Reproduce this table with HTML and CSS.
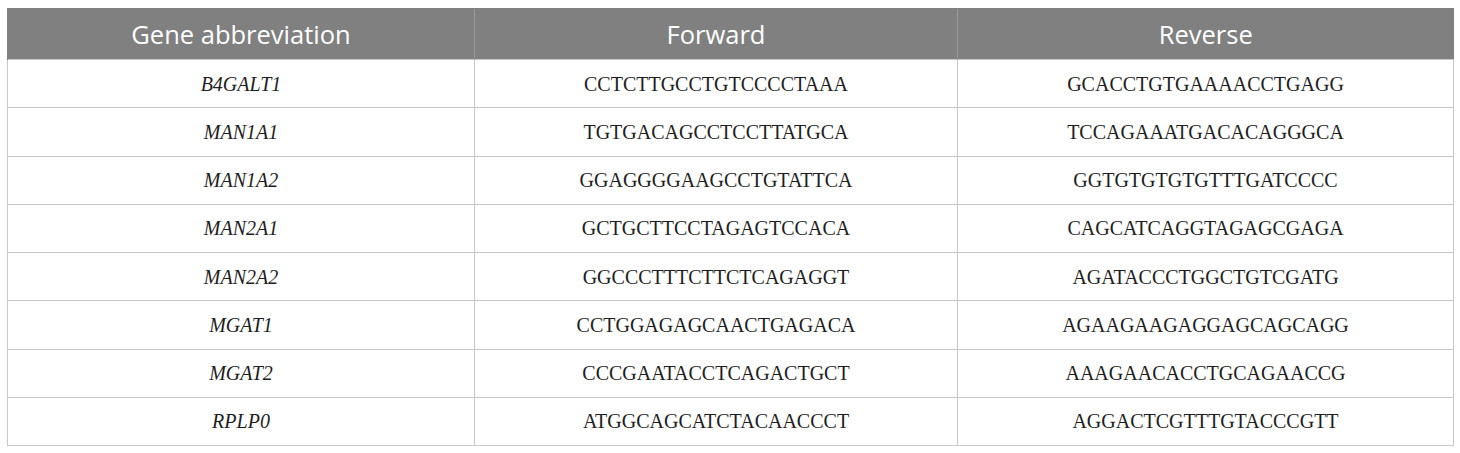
FILE: index.html
```html
<!DOCTYPE html>
<html>
<head>
<meta charset="utf-8">
<link rel="stylesheet" href="styles.css">
</head>
<body>
<table class="primers">
  <colgroup>
    <col class="c1"><col class="c2"><col class="c3">
  </colgroup>
  <thead>
    <tr><th>Gene abbreviation</th><th>Forward</th><th>Reverse</th></tr>
  </thead>
  <tbody>
    <tr><td class="gene">B4GALT1</td><td>CCTCTTGCCTGTCCCCTAAA</td><td>GCACCTGTGAAAACCTGAGG</td></tr>
    <tr><td class="gene">MAN1A1</td><td>TGTGACAGCCTCCTTATGCA</td><td>TCCAGAAATGACACAGGGCA</td></tr>
    <tr><td class="gene">MAN1A2</td><td>GGAGGGGAAGCCTGTATTCA</td><td>GGTGTGTGTGTTTGATCCCC</td></tr>
    <tr><td class="gene">MAN2A1</td><td>GCTGCTTCCTAGAGTCCACA</td><td>CAGCATCAGGTAGAGCGAGA</td></tr>
    <tr><td class="gene">MAN2A2</td><td>GGCCCTTTCTTCTCAGAGGT</td><td>AGATACCCTGGCTGTCGATG</td></tr>
    <tr><td class="gene">MGAT1</td><td>CCTGGAGAGCAACTGAGACA</td><td>AGAAGAAGAGGAGCAGCAGG</td></tr>
    <tr><td class="gene">MGAT2</td><td>CCCGAATACCTCAGACTGCT</td><td>AAAGAACACCTGCAGAACCG</td></tr>
    <tr><td class="gene">RPLP0</td><td>ATGGCAGCATCTACAACCCT</td><td>AGGACTCGTTTGTACCCGTT</td></tr>
  </tbody>
</table>
</body>
</html>
```

FILE: styles.css
```css
html, body {
  margin: 0;
  padding: 0;
  background: #ffffff;
}
body {
  padding: 8px 0 0 7px;
}
.primers {
  border-collapse: collapse;
  table-layout: fixed;
  width: 1446px;
}
.c1 { width: 467px; }
.c2 { width: 483px; }
.c3 { width: 496px; }
.primers th {
  background: #7f807f;
  color: #ffffff;
  font-family: "Open Sans", "Noto Sans", sans-serif;
  font-weight: 400;
  font-size: 25.5px;
  line-height: 1.2;
  height: 50px;
  padding: 0;
  border-left: 1px solid #9a9a9a;
  border-top: 1px solid #7f807f;
  text-align: center;
  vertical-align: middle;
}
.primers th:first-child {
  border-left: 1px solid #7f807f;
}
.primers td {
  font-family: "Liberation Serif", "Times New Roman", serif;
  font-size: 20px;
  line-height: 1.2;
  color: #1e1e1e;
  height: 47.25px;
  padding: 0;
  border: 1px solid #c8c8c8;
  text-align: center;
  vertical-align: middle;
}
.primers td.gene {
  font-style: italic;
}
```
